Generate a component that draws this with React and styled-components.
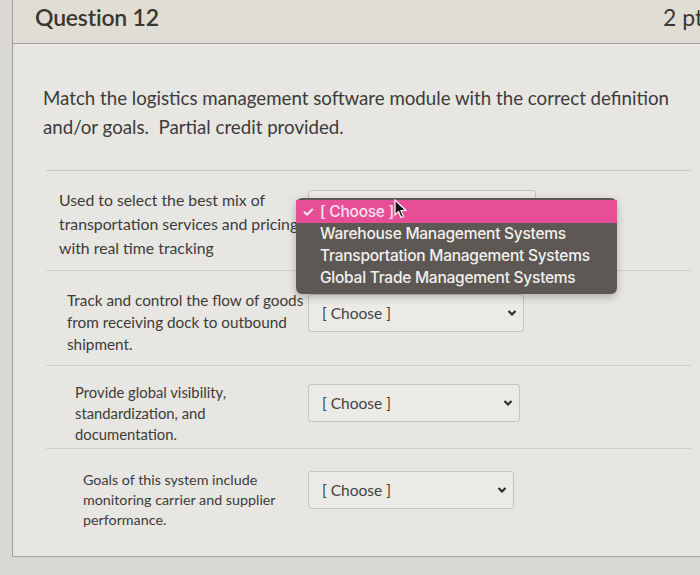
import React from "react";
import styled, { createGlobalStyle } from "styled-components";

const GlobalStyle = createGlobalStyle`
  html, body {
    margin: 0;
    padding: 0;
    background: #d9d8d4;
  }
  body {
    font-family: Lato, "Open Sans", sans-serif;
    color: #3a3734;
  }
`;

const Page = styled.div`
  position: relative;
  width: 700px;
  height: 575px;
  overflow: hidden;
  background: #d9d8d4;
`;

const Panel = styled.section`
  margin-left: 12px;
  width: 720px;
  height: 556px;
  border-left: 1px solid #9f9c97;
  border-bottom: 1px solid #a9a6a1;
  background: #e7e6e2;
  display: flex;
  flex-direction: column;
`;

const Header = styled.header`
  height: 44px;
  display: flex;
  justify-content: space-between;
  align-items: flex-start;
  padding-left: 22px;
  background: #e0ddd5;
  border-bottom: 1px solid #a6a29b;
  box-sizing: border-box;

  & h2 {
    margin: 0;
    font-size: 23px;
    line-height: 34px;
    font-weight: 600;
    color: #3b3631;
    letter-spacing: -0.2px;
  }

  & span {
    font-size: 23px;
    line-height: 34px;
    color: #3b3631;
    width: 70px;
  }
`;

const Prompt = styled.p`
  margin: 40px 0 0 30px;
  width: 635px;
  font-size: 18.7px;
  line-height: 29px;
  color: #3b3b3a;
`;

const Rows = styled.div`
  margin: 28px 0 0 33px;
  width: 645px;
  border-top: 1px solid #cbc9c4;
`;

const Row = styled.div`
  display: flex;
  align-items: flex-start;
  height: ${(p) => p.$h}px;
  box-sizing: border-box;
  padding-top: ${(p) => p.$top}px;
  border-bottom: ${(p) => (p.$last ? "none" : "1px solid #cfcdc8")};
`;

const Definition = styled.div`
  width: 262px;
  box-sizing: border-box;
  padding-left: ${(p) => p.$indent}px;
  font-size: ${(p) => p.$size}px;
  line-height: ${(p) => p.$lh}px;
  color: #3d3b39;
  white-space: nowrap;
`;

const Select = styled.div`
  width: ${(p) => p.$w}px;
  height: 38px;
  margin-top: ${(p) => p.$offset}px;
  box-sizing: border-box;
  display: flex;
  align-items: center;
  justify-content: space-between;
  padding: 0 6px 0 13px;
  background: #ebeae6;
  border: 1px solid #c6c4bf;
  border-radius: 3px;
  font-size: 15.5px;
  color: #444240;
`;

const Menu = styled.ul`
  position: absolute;
  left: 296px;
  top: 198px;
  width: 321px;
  margin: 0;
  padding: 2px 0 5px;
  list-style: none;
  background: #5d5853;
  border-radius: 6px;
  box-shadow: 0 3px 8px rgba(0, 0, 0, 0.25);
  font-family: Inter, "Open Sans", sans-serif;
`;

const Item = styled.li`
  position: relative;
  height: ${(p) => (p.$active ? 23 : 22)}px;
  line-height: ${(p) => (p.$active ? 23 : 22)}px;
  padding-left: 24px;
  font-size: 15.5px;
  font-weight: 500;
  letter-spacing: -0.25px;
  color: ${(p) => (p.$active ? "#fbe3ef" : "#f3f1ee")};
  background: ${(p) => (p.$active ? "#e84e95" : "transparent")};
`;

const Check = styled.span`
  position: absolute;
  left: 6px;
  top: 0;
  font-size: 14px;
  font-weight: 700;
`;

const Cursor = styled.svg`
  position: absolute;
  left: 394px;
  top: 199px;
`;

const Chevron = () => (
  <svg width="10" height="8" viewBox="0 0 10 8">
    <polyline points="1.5,2 5,5.5 8.5,2" fill="none" stroke="#2e2c2a" strokeWidth="2.2" />
  </svg>
);

const rows = [
  {
    lines: ["Used to select the best mix of", "transportation services and pricing", "with real time tracking"],
    indent: 13, size: 15.8, lh: 24, h: 100, top: 17, offset: 2, w: 228,
  },
  {
    lines: ["Track and control the flow of goods", "from receiving dock to outbound", "shipment."],
    indent: 21, size: 15.3, lh: 22, h: 95, top: 18, offset: 5, w: 216,
  },
  {
    lines: ["Provide global visibility,", "standardization, and", "documentation."],
    indent: 29, size: 14.8, lh: 21, h: 83, top: 16, offset: 2, w: 212,
  },
  {
    lines: ["Goals of this system include", "monitoring carrier and supplier", "performance."],
    indent: 37, size: 14.3, lh: 20, h: 106, top: 21, offset: 1, w: 206,
  },
];

const options = [
  "Warehouse Management Systems",
  "Transportation Management Systems",
  "Global Trade Management Systems",
];

export default function App() {
  return (
    <Page>
      <GlobalStyle />
      <Panel>
        <Header>
          <h2>Question 12</h2>
          <span>2 pt</span>
        </Header>
        <Prompt>
          Match the logistics management software module with the correct definition
          and/or goals.&nbsp; Partial credit provided.
        </Prompt>
        <Rows>
          {rows.map((r, i) => (
            <Row key={i} $h={r.h} $top={r.top} $last={i === rows.length - 1}>
              <Definition $indent={r.indent} $size={r.size} $lh={r.lh}>
                {r.lines.map((l, j) => (
                  <div key={j}>{l}</div>
                ))}
              </Definition>
              <Select $w={r.w} $offset={r.offset}>
                <span>[ Choose ]</span>
                <Chevron />
              </Select>
            </Row>
          ))}
        </Rows>
      </Panel>
      <Menu>
        <Item $active>
          <Check>✓</Check>[ Choose ]
        </Item>
        {options.map((o) => (
          <Item key={o}>{o}</Item>
        ))}
      </Menu>
      <Cursor width="14" height="20" viewBox="0 0 14 20">
        <path d="M1 1 L1 16 L4.5 12.5 L7 18.5 L9.5 17.5 L7 11.5 L12 11.5 Z" fill="#111" stroke="#fff" strokeWidth="1.2" />
      </Cursor>
    </Page>
  );
}
